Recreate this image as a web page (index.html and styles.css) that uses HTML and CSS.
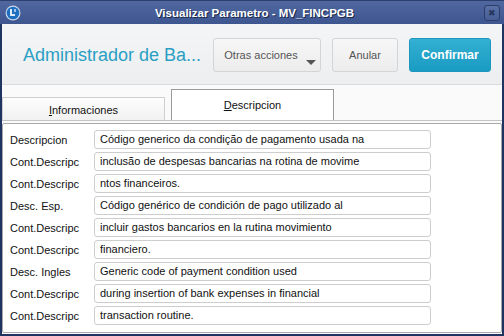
FILE: index.html
```html
<html lang="es">
<head>
    <meta charset="UTF-8">
    <title>Visualizar Parametro - MV_FINCPGB</title>
    <link rel="stylesheet" href="styles.css">
</head>
<body>
    <div class="window">
        <!-- Title bar -->
        <div class="titlebar">
            <div class="app-icon">
                <svg width="16" height="16" viewBox="0 0 16 16">
                    <circle cx="8" cy="8" r="7.5" fill="#c9d6ea"/>
                    <circle cx="8" cy="8" r="6.3" fill="#1f6fc0"/>
                    <path d="M5 4 L7 4 L7 9 L10 9 L10 11 L5 11 Z" fill="#dfeaf7"/>
                    <path d="M9 4 L11 4 L11 7 L9 7 Z" fill="#9fc2e8"/>
                </svg>
            </div>
            <div class="title">Visualizar Parametro - MV_FINCPGB</div>
            <div class="close-btn">&#x2716;</div>
        </div>

        <!-- Header -->
        <div class="header">
            <h1>Administrador de Ba...</h1>
            <div class="actions">
                <button class="btn btn-more">Otras acciones<span class="caret"></span></button>
                <button class="btn btn-cancel">Anular</button>
                <button class="btn btn-primary">Confirmar</button>
            </div>
        </div>

        <!-- Tabs -->
        <div class="tabs">
            <div class="tab"><u>I</u>nformaciones</div>
            <div class="tab active"><u>D</u>escripcion</div>
        </div>

        <!-- Fields -->
        <div class="panel">
            <div class="panel-inner">
                <div class="row"><span class="label">Descripcion</span><div class="field">Código generico da condição de pagamento usada na</div></div>
                <div class="row"><span class="label">Cont.Descripc</span><div class="field">inclusão de despesas bancarias na rotina de movime</div></div>
                <div class="row"><span class="label">Cont.Descripc</span><div class="field">ntos financeiros.</div></div>
                <div class="row"><span class="label">Desc. Esp.</span><div class="field">Código genérico de condición de pago utilizado al</div></div>
                <div class="row"><span class="label">Cont.Descripc</span><div class="field">incluir gastos bancarios en la rutina movimiento</div></div>
                <div class="row"><span class="label">Cont.Descripc</span><div class="field">financiero.</div></div>
                <div class="row"><span class="label">Desc. Ingles</span><div class="field">Generic code of payment condition used</div></div>
                <div class="row"><span class="label">Cont.Descripc</span><div class="field">during insertion of bank expenses in financial</div></div>
                <div class="row"><span class="label">Cont.Descripc</span><div class="field">transaction routine.</div></div>
            </div>
        </div>
    </div>
</body>
</html>
```

FILE: styles.css
```css
/* General */
body {
    margin: 0;
    font-family: "Liberation Sans", Arial, sans-serif;
    font-size: 11px;
    color: #000;
}

.window {
    width: 504px;
    height: 336px;
    box-sizing: border-box;
    border: 2px solid #1f3461;
    border-top: none;
    background-color: #fafafa;
    display: flex;
    flex-direction: column;
}

/* Title bar */
.titlebar {
    height: 24px;
    margin: 0 -2px;
    display: flex;
    align-items: center;
    padding: 0 4px 0 5px;
    background: linear-gradient(#5067a0, #3e5690);
    border-top: 1px solid #2c3f6e;
    box-sizing: border-box;
}

.app-icon {
    width: 16px;
    height: 16px;
}

.title {
    flex: 1;
    text-align: center;
    color: #fff;
    font-weight: bold;
    font-size: 11.5px;
    text-shadow: 1px 1px 0 #1c2a4c;
    padding-left: 4px;
}

.close-btn {
    width: 14px;
    height: 14px;
    border: 1px solid #2b3d68;
    border-radius: 3px;
    background: linear-gradient(#5a70a6, #465e96);
    color: #26355c;
    font-size: 9px;
    line-height: 14px;
    text-align: center;
}

/* Header */
.header {
    height: 61px;
    display: flex;
    align-items: center;
    justify-content: space-between;
    padding: 0 11px 0 21px;
    background: linear-gradient(#f4f5f6, #eceeef);
    border-bottom: 1px solid #d9dadb;
    box-sizing: border-box;
}

.header h1 {
    margin: 0;
    font-weight: normal;
    font-size: 18px;
    color: #2a9fc4;
    padding-top: 2px;
    white-space: nowrap;
}

.actions {
    display: flex;
    flex: none;
    gap: 11px;
    margin-top: 2px;
}

.btn {
    height: 34px;
    border: 1px solid #d3d4d5;
    border-radius: 3px;
    background: linear-gradient(#f7f7f7, #ececec);
    font-family: "Liberation Sans", Arial, sans-serif;
    font-size: 11px;
    color: #555;
    padding: 0;
}

.btn-more {
    width: 108px;
    position: relative;
    padding-right: 12px;
}

.btn-cancel {
    width: 66px;
}

.caret {
    position: absolute;
    right: 4px;
    bottom: 6px;
    border-left: 5px solid transparent;
    border-right: 5px solid transparent;
    border-top: 5px solid #555;
}

.btn-primary {
    width: 82px;
    border-color: #1d97bd;
    background: linear-gradient(#33b0d2, #1a9bc2);
    color: #fff;
    font-weight: bold;
    font-size: 12px;
}

/* Tabs */
.tabs {
    height: 35px;
    display: flex;
    align-items: flex-end;
    gap: 6px;
}

.tab {
    width: 163px;
    height: 23px;
    box-sizing: border-box;
    border: 1px solid #cfcfcf;
    border-bottom: none;
    background: linear-gradient(#fdfdfd, #f1f1f1);
    text-align: center;
    font-size: 11px;
    line-height: 24px;
    color: #111;
}

.tab.active {
    height: 31px;
    border-color: #9a9a9a;
    background: #fff;
    line-height: 30px;
}

/* Panel */
.panel {
    flex: 1;
    border-top: 1px solid #c4c4c4;
    padding: 2px 0 1px 0;
    display: flex;
}

.panel-inner {
    flex: 1;
    border: 1px solid #a9a9a9;
    border-radius: 2px;
    background: #fff;
    padding: 6px 0 0 7px;
    display: flex;
    flex-direction: column;
    gap: 3px;
}

.row {
    display: flex;
    align-items: center;
    height: 19px;
}

.label {
    width: 84px;
    font-size: 11px;
    color: #111;
}

.field {
    width: 337px;
    height: 19px;
    box-sizing: border-box;
    border: 1px solid #cdcdcd;
    border-radius: 3px;
    padding-left: 5px;
    line-height: 17px;
    font-size: 11px;
    color: #111;
}
```
